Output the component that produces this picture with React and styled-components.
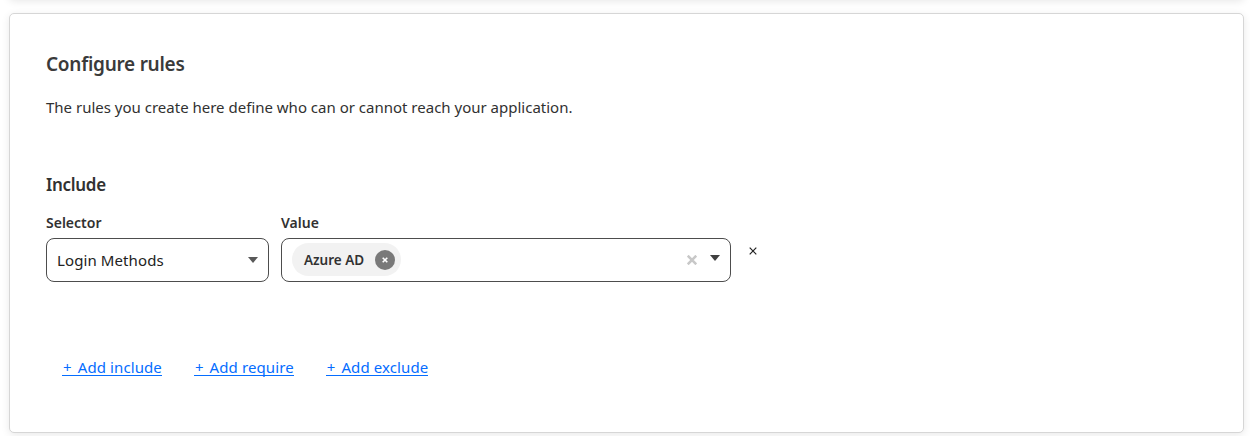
import React from "react";
import styled, { createGlobalStyle } from "styled-components";

const GlobalStyle = createGlobalStyle`
  *, *::before, *::after { box-sizing: border-box; }
  body {
    margin: 0;
    background: #fff;
    color: #313131;
    font-family: "Segoe UI", "Noto Sans", "Open Sans", sans-serif;
    font-size: 15px;
  }
  #root { height: 436px; overflow: hidden; }
`;

const Page = styled.main`
  display: flex;
  flex-direction: column;
  padding: 0 6px 0 9px;
`;

const PreviousCard = styled.div`
  height: 20px;
  margin: -20px 0 13px;
  border-radius: 5px;
  box-shadow: 0 1px 8px rgba(0, 0, 0, 0.1);
`;

const Card = styled.section`
  display: flex;
  flex-direction: column;
  height: 420px;
  padding: 36px;
  border: 1px solid #d6d6d6;
  border-radius: 5px;
  background: #fff;
  box-shadow: 0 2px 9px rgba(0, 0, 0, 0.09);
`;

const Title = styled.h2`
  margin: 0;
  color: #3a3a3a;
  font-size: 19px;
  line-height: 28px;
  font-weight: 600;
  letter-spacing: -0.27px;
`;

const Description = styled.p`
  margin: 17px 0 0;
  line-height: 24px;
`;

const GroupTitle = styled.h3`
  margin: 54px 0 0;
  font-size: 17px;
  line-height: 24px;
  font-weight: 600;
  letter-spacing: -0.3px;
`;

const RuleRow = styled.div`
  display: flex;
  margin-top: 16px;
`;

const Field = styled.div`
  width: ${(p) => p.$width}px;
  margin-right: 12px;
`;

const Label = styled.div`
  height: 25px;
  font-size: 14px;
  line-height: 20px;
  font-weight: 600;
`;

const Control = styled.div`
  display: flex;
  align-items: center;
  height: 44px;
  padding: 0 10px;
  border: 1px solid #4d4d4d;
  border-radius: 8px;
`;

const Selected = styled.span`
  flex: 1;
  color: #222;
  letter-spacing: 0.1px;
`;

const Chip = styled.span`
  display: flex;
  align-items: center;
  justify-content: space-between;
  width: 109px;
  height: 33px;
  margin: 0 auto 1px 0;
  padding: 0 6px 0 12px;
  border-radius: 17px;
  background: #f2f2f2;
  font-size: 13.5px;
  font-weight: 600;
  line-height: 21px;
`;

const ChipLabel = styled.span`
  padding-top: 1px;
`;

const ChipRemove = styled.button`
  display: grid;
  place-items: center;
  width: 20px;
  height: 20px;
  padding: 0;
  border: 0;
  border-radius: 50%;
  background: #797979;
`;

const ClearButton = styled.button`
  display: grid;
  place-items: center;
  width: 12px;
  height: 12px;
  margin-right: 12px;
  padding: 0;
  border: 0;
  background: none;
`;

const RemoveRule = styled(ClearButton)`
  margin: 31.5px 0 0 3.5px;
`;

const Caret = styled.span`
  margin-bottom: ${(p) => p.$raise || 0}px;
  border: 5px solid transparent;
  border-top: 6px solid ${(p) => p.$color};
  border-bottom: 0;
`;

const Actions = styled.div`
  display: flex;
  gap: 32px;
  margin: 74px 0 0 16px;
`;

const ActionLink = styled.a`
  height: 20px;
  border-bottom: 1px solid #056dff;
  color: #056dff;
  line-height: 23px;
  letter-spacing: 0.1px;
  white-space: nowrap;
`;

const Plus = styled.span`
  margin: 0 2px 0 1px;
`;

const Cross = ({ size, color, stroke }) => (
  <svg width={size} height={size} viewBox={`0 0 ${size} ${size}`} fill="none" stroke={color} strokeWidth={stroke}>
    <path d={`M.7 .7L${size - 0.7} ${size - 0.7}M${size - 0.7} .7L.7 ${size - 0.7}`} />
  </svg>
);

const actions = ["Add include", "Add require", "Add exclude"];

export default function App() {
  return (
    <Page>
      <GlobalStyle />
      <PreviousCard />
      <Card>
        <Title>Configure rules</Title>
        <Description>The rules you create here define who can or cannot reach your application.</Description>
        <GroupTitle>Include</GroupTitle>
        <RuleRow>
          <Field $width={223}>
            <Label>Selector</Label>
            <Control>
              <Selected>Login Methods</Selected>
              <Caret $color="#595959" />
            </Control>
          </Field>
          <Field $width={450}>
            <Label>Value</Label>
            <Control>
              <Chip>
                <ChipLabel>Azure AD</ChipLabel>
                <ChipRemove aria-label="Remove Azure AD">
                  <Cross size={6} color="#fff" stroke={1.6} />
                </ChipRemove>
              </Chip>
              <ClearButton aria-label="Clear values">
                <Cross size={10} color="#c8c8c8" stroke={2.6} />
              </ClearButton>
              <Caret $color="#404040" $raise={4} />
            </Control>
          </Field>
          <RemoveRule aria-label="Remove rule">
            <Cross size={8} color="#222" stroke={1.2} />
          </RemoveRule>
        </RuleRow>
        <Actions>
          {actions.map((label) => (
            <ActionLink key={label}>
              <Plus>+</Plus> {label}
            </ActionLink>
          ))}
        </Actions>
      </Card>
    </Page>
  );
}
